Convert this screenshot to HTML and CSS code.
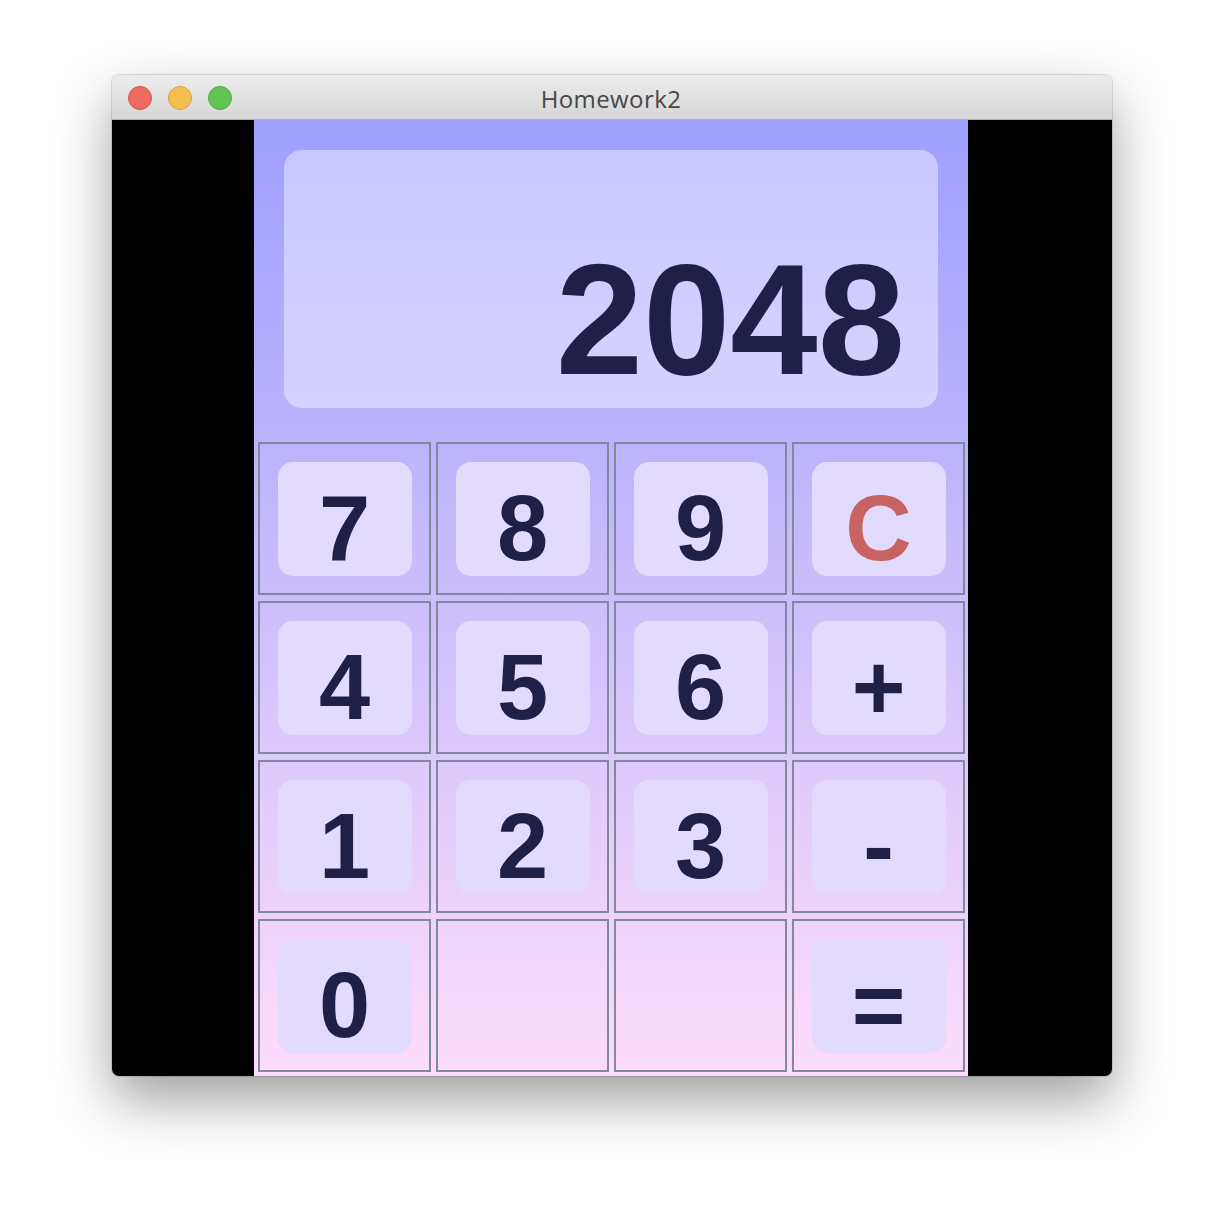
FILE: index.html
```
<!DOCTYPE html>
<html>
<head>
<meta charset="utf-8">
<link rel="stylesheet" href="styles.css">
</head>
<body>
<div class="window">
  <div class="titlebar">
    <div class="lights">
      <span class="light red"></span>
      <span class="light yellow"></span>
      <span class="light green"></span>
    </div>
    <div class="title">Homework2</div>
  </div>
  <div class="content">
    <div class="panel">
      <div class="display">2048</div>
      <div class="grid">
        <div class="cell"><div class="key">7</div></div>
        <div class="cell"><div class="key">8</div></div>
        <div class="cell"><div class="key">9</div></div>
        <div class="cell"><div class="key clear">C</div></div>
        <div class="cell"><div class="key">4</div></div>
        <div class="cell"><div class="key">5</div></div>
        <div class="cell"><div class="key">6</div></div>
        <div class="cell"><div class="key">+</div></div>
        <div class="cell"><div class="key">1</div></div>
        <div class="cell"><div class="key">2</div></div>
        <div class="cell"><div class="key">3</div></div>
        <div class="cell"><div class="key">-</div></div>
        <div class="cell"><div class="key">0</div></div>
        <div class="cell"></div>
        <div class="cell"></div>
        <div class="cell"><div class="key">=</div></div>
      </div>
    </div>
  </div>
</div>
</body>
</html>
```
FILE: styles.css
```
html, body {
  margin: 0;
  padding: 0;
  background: #ffffff;
}

body {
  width: 1224px;
  height: 1224px;
  overflow: hidden;
}

.window {
  margin-left: 112px;
  margin-top: 75px;
  width: 1000px;
  border-radius: 7px;
  overflow: hidden;
  box-shadow: 0 0 0 1px rgba(0, 0, 0, 0.12), 0 24px 55px rgba(0, 0, 0, 0.38);
}

.titlebar {
  position: relative;
  height: 44px;
  background: linear-gradient(#ececec, #d6d6d6);
  border-bottom: 1px solid #b3b3b3;
  display: flex;
  align-items: center;
  justify-content: center;
}

.lights {
  position: absolute;
  left: 16px;
  top: 11px;
  display: flex;
  gap: 16px;
}

.light {
  width: 22px;
  height: 22px;
  border-radius: 50%;
  display: block;
}

.red { background: #ee6a5f; border: 1px solid #d6544a; }
.yellow { background: #f5bf4f; border: 1px solid #d9a23a; }
.green { background: #61c554; border: 1px solid #4ea943; }

.title {
  font-family: "Open Sans", "Liberation Sans", sans-serif;
  font-size: 24px;
  letter-spacing: 0.4px;
  color: #474747;
  margin-left: -2px;
  margin-top: 2px;
}

.content {
  height: 956px;
  background: #000000;
  padding-left: 142px;
  display: flex;
}

.panel {
  width: 714px;
  height: 956px;
  background: linear-gradient(#9f9ffe 0%, #bdb4fc 35%, #e2cdfb 72%, #fddcfd 100%);
  padding-top: 30px;
  box-sizing: border-box;
  display: flex;
  flex-direction: column;
}

.display {
  margin: 0 30px;
  height: 258px;
  box-sizing: border-box;
  border-radius: 18px;
  background: rgba(255, 255, 255, 0.42);
  font-family: "Liberation Sans", Arial, sans-serif;
  font-weight: bold;
  font-size: 157px;
  line-height: 157px;
  color: #1f1f48;
  text-align: right;
  padding-top: 91px;
  padding-right: 33px;
}

.grid {
  margin: 34px 3px 0 4px;
  display: grid;
  grid-template-columns: repeat(4, 173px);
  grid-template-rows: repeat(4, 153px);
  column-gap: 5px;
  row-gap: 6px;
}

.cell {
  border: 2px solid #808a9c;
  display: flex;
  align-items: center;
  justify-content: center;
}

.key {
  width: 134px;
  height: 114px;
  box-sizing: border-box;
  border-radius: 15px;
  background: #e3dbfe;
  font-family: "Liberation Sans", Arial, sans-serif;
  font-weight: bold;
  font-size: 92px;
  line-height: 92px;
  padding-top: 20px;
  text-align: center;
  color: #1f1f48;
}

.key.clear {
  color: #c86363;
}
```
